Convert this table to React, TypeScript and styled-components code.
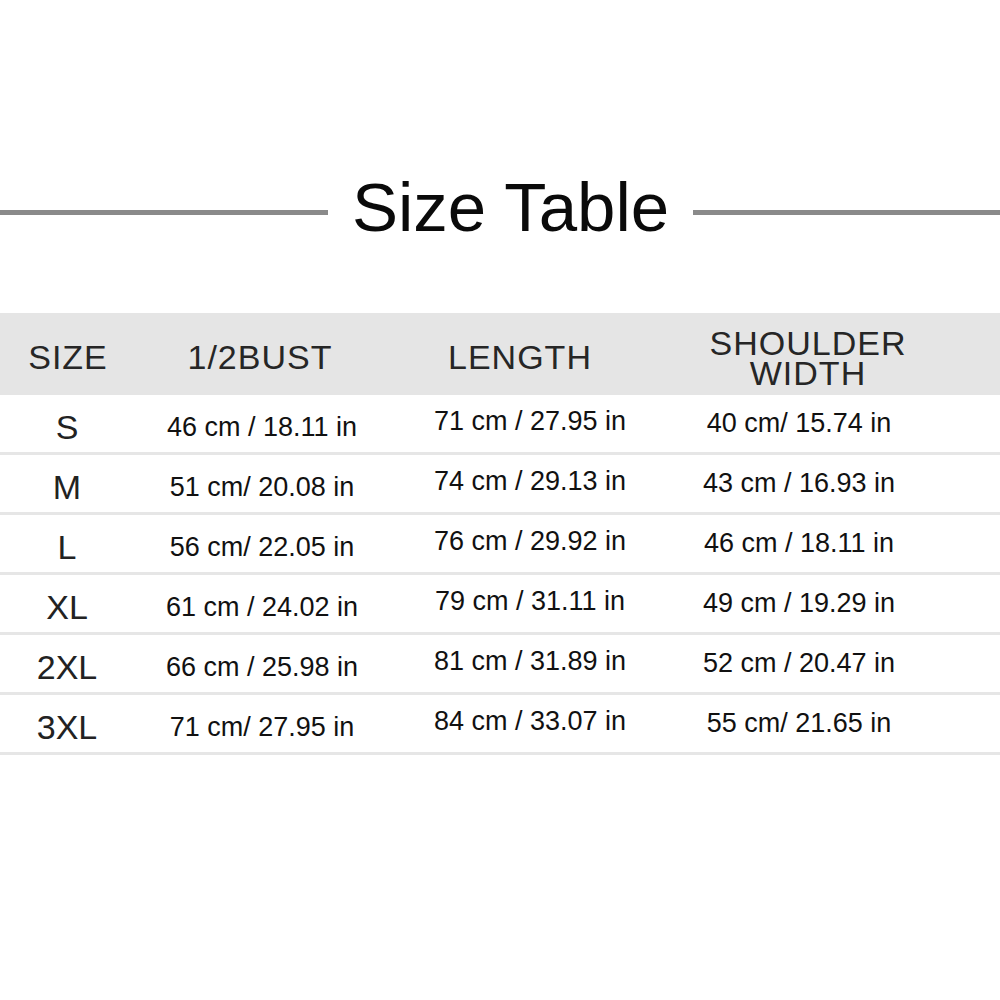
import styled, { createGlobalStyle, css } from "styled-components";

const GlobalStyle = createGlobalStyle`
  html, body {
    margin: 0;
    background: #fff;
  }
  body {
    font-family: "Liberation Sans", Arial, sans-serif;
  }
`;

// shift a centred label by (dx, dy) px using padding, so it stays in flow
const nudge = (dx: number, dy: number) => css`
  padding: ${dy > 0 ? dy * 2 : 0}px ${dx < 0 ? -dx * 2 : 0}px
    ${dy < 0 ? -dy * 2 : 0}px ${dx > 0 ? dx * 2 : 0}px;
`;

const COLS = "134px 256px 280px 258px";

const Page = styled.div`
  width: 1000px;
  height: 1000px;
  padding-top: 168px;
  box-sizing: border-box;
  overflow: hidden;
`;

const TitleRow = styled.div`
  display: grid;
  grid-template-columns: 328px auto 1fr;
  column-gap: 24px;
  align-items: center;
`;

const Rule = styled.div`
  height: 5px;
  margin-top: 8px;
  background: #8a8a8a;
`;

const Title = styled.h1`
  margin: 0;
  font-size: 69px;
  line-height: 80px;
  font-weight: 400;
  color: #0a0a0a;
`;

const Table = styled.div`
  margin-top: 65px;
`;

const HeaderRow = styled.div`
  display: grid;
  grid-template-columns: ${COLS};
  align-items: center;
  height: 82px;
  background: #e5e5e5;
`;

const HeaderCell = styled.div<{ $dx: number; $dy: number }>`
  text-align: center;
  font-size: 34px;
  line-height: 30px;
  letter-spacing: 1px;
  color: #262626;
  ${({ $dx, $dy }) => nudge($dx, $dy)}
`;

const DataRow = styled.div`
  display: grid;
  grid-template-columns: ${COLS};
  align-items: center;
  height: 57px;
  border-bottom: 3px solid #e6e6e6;
`;

const SizeCell = styled.div<{ $dy: number }>`
  text-align: center;
  font-size: 34px;
  line-height: 1.15;
  color: #222;
  ${({ $dy }) => nudge(0, $dy)}
`;

const ValueCell = styled.div<{ $dy: number }>`
  text-align: center;
  font-size: 27px;
  line-height: 1.15;
  color: #111;
  white-space: nowrap;
  ${({ $dy }) => nudge(0, $dy)}
`;

const headers = [
  { label: ["SIZE"], dx: 1, dy: 2.5 },
  { label: ["1/2BUST"], dx: -2, dy: 2.5 },
  { label: ["LENGTH"], dx: -10, dy: 2.5 },
  { label: ["SHOULDER", "WIDTH"], dx: 9, dy: 3.5 },
];

// vertical offset of each data column inside its row
const colDy = [4, 4, -2, 0];

const rows = [
  ["S", "46 cm / 18.11 in", "71 cm / 27.95 in", "40 cm/ 15.74 in"],
  ["M", "51 cm/ 20.08 in", "74 cm / 29.13 in", "43 cm / 16.93 in"],
  ["L", "56 cm/ 22.05 in", "76 cm / 29.92 in", "46 cm / 18.11 in"],
  ["XL", "61 cm / 24.02 in", "79 cm / 31.11 in", "49 cm / 19.29 in"],
  ["2XL", "66 cm / 25.98 in", "81 cm / 31.89 in", "52 cm / 20.47 in"],
  ["3XL", "71 cm/ 27.95 in", "84 cm / 33.07 in", "55 cm/ 21.65 in"],
];

export default function App() {
  return (
    <>
      <GlobalStyle />
      <Page>
        <TitleRow>
          <Rule />
          <Title>Size Table</Title>
          <Rule />
        </TitleRow>

        <Table>
          <HeaderRow>
            {headers.map((h) => (
              <HeaderCell key={h.label[0]} $dx={h.dx} $dy={h.dy}>
                {h.label.map((line) => (
                  <div key={line}>{line}</div>
                ))}
              </HeaderCell>
            ))}
          </HeaderRow>

          {rows.map(([size, bust, length, shoulder]) => (
            <DataRow key={size}>
              <SizeCell $dy={colDy[0]}>{size}</SizeCell>
              <ValueCell $dy={colDy[1]}>{bust}</ValueCell>
              <ValueCell $dy={colDy[2]}>{length}</ValueCell>
              <ValueCell $dy={colDy[3]}>{shoulder}</ValueCell>
            </DataRow>
          ))}
        </Table>
      </Page>
    </>
  );
}
